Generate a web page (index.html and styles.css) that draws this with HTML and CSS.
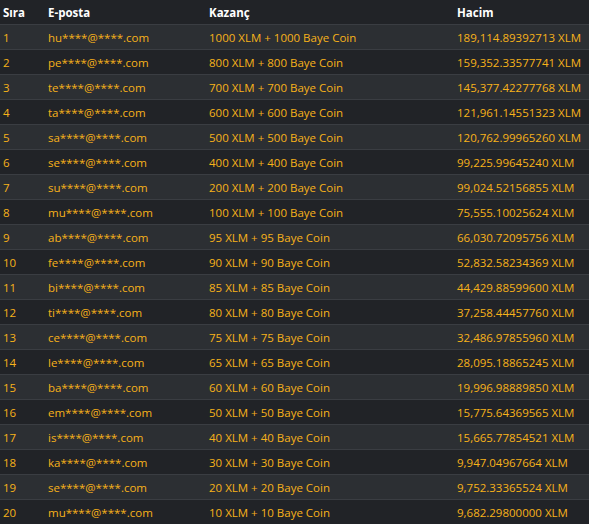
FILE: index.html
```html
<!DOCTYPE html>
<html lang="tr">
<head>
<meta charset="utf-8">
<link rel="stylesheet" href="styles.css">
</head>
<body>
<table class="board">
  <colgroup>
    <col class="c-rank"><col class="c-mail"><col class="c-prize"><col class="c-vol">
  </colgroup>
  <thead>
    <tr><th>Sıra</th><th>E-posta</th><th>Kazanç</th><th>Hacim</th></tr>
  </thead>
  <tbody>
    <tr><td>1</td><td>hu****@****.com</td><td>1000 XLM + 1000 Baye Coin</td><td>189,114.89392713 XLM</td></tr>
    <tr><td>2</td><td>pe****@****.com</td><td>800 XLM + 800 Baye Coin</td><td>159,352.33577741 XLM</td></tr>
    <tr><td>3</td><td>te****@****.com</td><td>700 XLM + 700 Baye Coin</td><td>145,377.42277768 XLM</td></tr>
    <tr><td>4</td><td>ta****@****.com</td><td>600 XLM + 600 Baye Coin</td><td>121,961.14551323 XLM</td></tr>
    <tr><td>5</td><td>sa****@****.com</td><td>500 XLM + 500 Baye Coin</td><td>120,762.99965260 XLM</td></tr>
    <tr><td>6</td><td>se****@****.com</td><td>400 XLM + 400 Baye Coin</td><td>99,225.99645240 XLM</td></tr>
    <tr><td>7</td><td>su****@****.com</td><td>200 XLM + 200 Baye Coin</td><td>99,024.52156855 XLM</td></tr>
    <tr><td>8</td><td>mu****@****.com</td><td>100 XLM + 100 Baye Coin</td><td>75,555.10025624 XLM</td></tr>
    <tr><td>9</td><td>ab****@****.com</td><td>95 XLM + 95 Baye Coin</td><td>66,030.72095756 XLM</td></tr>
    <tr><td>10</td><td>fe****@****.com</td><td>90 XLM + 90 Baye Coin</td><td>52,832.58234369 XLM</td></tr>
    <tr><td>11</td><td>bi****@****.com</td><td>85 XLM + 85 Baye Coin</td><td>44,429.88599600 XLM</td></tr>
    <tr><td>12</td><td>ti****@****.com</td><td>80 XLM + 80 Baye Coin</td><td>37,258.44457760 XLM</td></tr>
    <tr><td>13</td><td>ce****@****.com</td><td>75 XLM + 75 Baye Coin</td><td>32,486.97855960 XLM</td></tr>
    <tr><td>14</td><td>le****@****.com</td><td>65 XLM + 65 Baye Coin</td><td>28,095.18865245 XLM</td></tr>
    <tr><td>15</td><td>ba****@****.com</td><td>60 XLM + 60 Baye Coin</td><td>19,996.98889850 XLM</td></tr>
    <tr><td>16</td><td>em****@****.com</td><td>50 XLM + 50 Baye Coin</td><td>15,775.64369565 XLM</td></tr>
    <tr><td>17</td><td>is****@****.com</td><td>40 XLM + 40 Baye Coin</td><td>15,665.77854521 XLM</td></tr>
    <tr><td>18</td><td>ka****@****.com</td><td>30 XLM + 30 Baye Coin</td><td>9,947.04967664 XLM</td></tr>
    <tr><td>19</td><td>se****@****.com</td><td>20 XLM + 20 Baye Coin</td><td>9,752.33365524 XLM</td></tr>
    <tr><td>20</td><td>mu****@****.com</td><td>10 XLM + 10 Baye Coin</td><td>9,682.29800000 XLM</td></tr>
  </tbody>
</table>
</body>
</html>
```

FILE: styles.css
```css
html, body {
  margin: 0;
  padding: 0;
  background: #ffffff;
}
.board {
  width: 100%;
  border-collapse: collapse;
  table-layout: fixed;
  font-family: "Open Sans", "Noto Sans", sans-serif;
  font-size: 11.5px;
  background: #212327;
}
.c-rank { width: 45px; }
.c-mail { width: 161px; }
.c-prize { width: 248px; }
.board th, .board td {
  height: 24px;
  padding: 0 0 0 3px;
  text-align: left;
  vertical-align: middle;
  white-space: nowrap;
  border-bottom: 1px solid #3a3d42;
}
.board th {
  color: #ffffff;
  font-weight: 700;
}
.board td {
  color: #f7b21a;
}
.board tbody tr:nth-child(odd) {
  background: #2c2f33;
}
.board tbody tr:nth-child(even) {
  background: #212327;
}
.board tbody tr:last-child td {
  border-bottom: none;
}
```
